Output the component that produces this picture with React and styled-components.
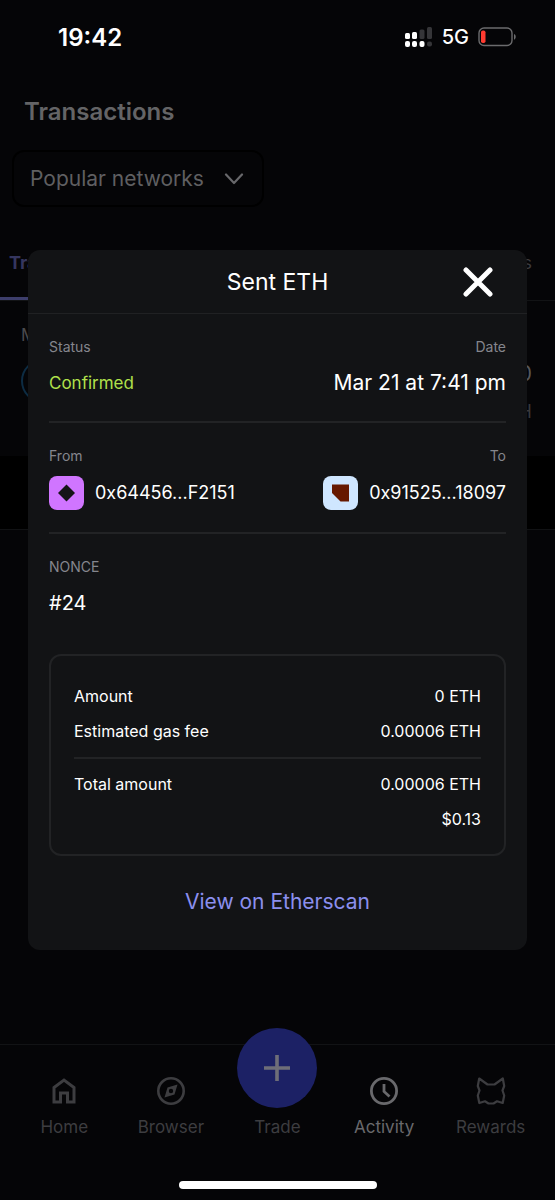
import React from "react";
import styled, { createGlobalStyle } from "styled-components";

const GlobalStyle = createGlobalStyle`
    * {
        box-sizing: border-box;
        margin: 0;
        padding: 0;
    }

    body {
        background-color: #050507;
        font-family: Inter, "Liberation Sans", sans-serif;
        color: #fff;
    }

    button, select {
        font-family: inherit;
    }
`

const Screen = styled.div`
    position: relative;
    display: flex;
    flex-direction: column;
    min-height: 100vh;
`

const StatusBar = styled.div`
    display: flex;
    align-items: center;
    justify-content: space-between;
    height: 74px;
    padding: 0 38px 0 58px;
`

const Clock = styled.time`
    font-size: 24px;
    font-weight: 600;
`

const StatusIcons = styled.div`
    display: flex;
    align-items: center;
    gap: 9px;
    font-size: 20px;
    font-weight: 500;
`

const PageTitle = styled.h1`
    padding: 22px 24px 0;
    font-size: 24px;
    font-weight: 600;
    line-height: 32px;
    color: #646466;
`

const Filter = styled.div`
    display: flex;
    padding: 22px 12px 0;
`

const SelectWrap = styled.div`
    display: grid;
    align-items: center;
    width: 252px;
    max-width: 100%;

    > * {
        grid-area: 1 / 1;
    }

    svg {
        justify-self: end;
        margin-right: 20px;
        pointer-events: none;
    }
`

const Select = styled.select`
    width: 100%;
    height: 57px;
    padding: 0 48px 0 16px;
    appearance: none;
    background: none;
    border: 2px solid #000;
    border-radius: 12px;
    font-size: 21px;
    color: #5f5f61;
`

const Tabs = styled.div`
    display: flex;
    justify-content: space-between;
    margin-top: 20px;
    padding-right: 23px;
    border-bottom: 1px solid #121315;
`

const Tab = styled.button`
    height: 73px;
    padding: 0 9px;
    background: none;
    border: none;
    border-bottom: 3px solid ${(props) => (props.$active ? "#3d3e6b" : "transparent")};
    font-size: 18px;
    font-weight: ${(props) => (props.$active ? 700 : 400)};
    color: ${(props) => (props.$active ? "#35365f" : "#3b3b3e")};

    &:last-child {
        padding-right: 0;
    }
`

const Activity = styled.div`
    display: grid;
    grid-template-columns: 44px auto;
    grid-template-rows: 24px 1fr;
    align-items: center;
    justify-content: space-between;
    height: 155px;
    padding: 22px 23px 17px 21px;
`

const ActivityDate = styled.p`
    grid-column: 1 / -1;
    font-size: 17px;
    line-height: 24px;
    color: #4a4a4d;
`

const Token = styled.span`
    width: 44px;
    height: 44px;
    margin-bottom: 24px;
    border: 2px solid #0d2c43;
    border-radius: 50%;
`

const Amounts = styled.div`
    text-align: right;
    font-size: 21px;
    line-height: 38px;
    color: #57575a;

    small {
        display: block;
        font-size: 18px;
        color: #38383b;
    }
`

const Band = styled.div`
    height: 74px;
    background-color: #000;
    border-bottom: 1px solid #111214;
`

const Overlay = styled.div`
    position: absolute;
    inset: 0;
    display: flex;
    align-items: center;
    padding: 0 28px;
`

const Modal = styled.section`
    width: 100%;
    padding-bottom: 24px;
    background-color: #121315;
    border-radius: 12px;
`

const ModalHeader = styled.header`
    display: grid;
    grid-template-columns: 56px 1fr 56px;
    align-items: center;
    height: 64px;
    padding: 0 21px;
    border-bottom: 1px solid #202123;
`

const ModalTitle = styled.h2`
    grid-column: 2;
    text-align: center;
    font-size: 23px;
    font-weight: 400;
`

const CloseButton = styled.button`
    display: flex;
    justify-content: center;
    background: none;
    border: none;
    color: #fff;
`

const ModalBody = styled.div`
    padding: 0 21px;
`

const Section = styled.dl`
    display: flex;
    justify-content: space-between;
    padding: 23px 0 ${(props) => props.$bottom}px;
    border-bottom: ${(props) => (props.$last ? "none" : "2px solid #222325")};
`

const Field = styled.div`
    text-align: ${(props) => (props.$right ? "right" : "left")};
`

const Label = styled.dt`
    margin-bottom: ${(props) => (props.$tight ? 10 : 14)}px;
    font-size: 14px;
    line-height: 20px;
    color: #85868d;
`

const Value = styled.dd`
    font-size: ${(props) => props.$size || 21}px;
    line-height: 24px;
    color: ${(props) => props.$color || "#fff"};
`

const Address = styled.dd`
    display: flex;
    align-items: center;
    gap: 11px;
    font-size: 18px;
    line-height: 34px;
`

const Summary = styled.div`
    padding: 28px 23px 23px;
    border: 2px solid #222325;
    border-radius: 12px;
`

const Rows = styled.dl`
    display: grid;
    grid-template-columns: 1fr auto;
    row-gap: 11px;
    font-size: 16px;
    line-height: 24px;

    dd {
        grid-column: 2;
        text-align: right;
    }

    & + & {
        margin-top: 14px;
        padding-top: 13px;
        border-top: 2px solid #222325;
    }
`

const ExplorerLink = styled.a`
    display: block;
    margin-top: 22px;
    text-align: center;
    text-decoration: none;
    font-size: 21px;
    line-height: 48px;
    color: #8b8fee;
`

const TabBar = styled.nav`
    display: grid;
    grid-template-columns: repeat(5, 1fr);
    height: 137px;
    margin-top: auto;
    padding: 23px 11px 0;
    border-top: 1px solid #121315;
`

const TabItem = styled.button`
    display: flex;
    flex-direction: column;
    align-items: center;
    justify-content: flex-end;
    gap: 10px;
    height: 71px;
    background: none;
    border: none;
    font-size: 17px;
    line-height: 24px;
    color: ${(props) => (props.$active ? "#69696c" : "#3d3d40")};
`

const TradeIcon = styled.span`
    display: flex;
    align-items: center;
    justify-content: center;
    flex: none;
    width: 80px;
    height: 80px;
    margin-bottom: -3px;
    background-color: #1c2165;
    border-radius: 50%;
    color: #6e6e78;
`

const HomeIndicator = styled.div`
    width: 198px;
    height: 8px;
    margin: 0 auto 11px;
    background-color: #fff;
    border-radius: 4px;
`

const SignalIcon = () => (
    <svg width="28" height="20" viewBox="0 0 28 20" fill="#fff">
        <rect x="0" y="6" width="5" height="6" rx="1.5" />
        <rect x="7" y="5" width="5" height="7" rx="1.5" />
        <rect x="14.5" y="2.5" width="5" height="9.5" rx="1.5" fill="#353538" />
        <rect x="22" y="0" width="5" height="12" rx="1.5" fill="#353538" />
        <rect x="0" y="14" width="5" height="6" rx="2" />
        <rect x="7" y="14" width="5" height="6" rx="2" />
        <rect x="14.5" y="14" width="5" height="6" rx="2" />
        <rect x="22" y="14.5" width="5" height="5" rx="2" fill="#353538" />
    </svg>
)

const BatteryIcon = () => (
    <svg width="39" height="20" viewBox="0 0 39 20">
        <rect x="1" y="1" width="33" height="17.5" rx="5" fill="none" stroke="#6b6b6d" strokeWidth="1.4" />
        <rect x="3" y="3.5" width="4.5" height="12.5" rx="1.8" fill="#ff3b30" />
        <path d="M36 7c2.3 0.6 2.3 5 0 5.700z" fill="#6b6b6d" />
    </svg>
)

const ChevronIcon = () => (
    <svg width="20" height="12" viewBox="0 0 20 12" fill="none" stroke="#68686b" strokeWidth="2.2" strokeLinecap="round" strokeLinejoin="round">
        <path d="M2 1.500l8 8.500 8-8.500" />
    </svg>
)

const CloseIcon = () => (
    <svg width="30" height="30" viewBox="0 0 30 30" stroke="currentColor" strokeWidth="5" strokeLinecap="round">
        <path d="M3 3l24 24M27 3L3 27" />
    </svg>
)

const FromAvatar = () => (
    <svg width="35" height="34" viewBox="0 0 35 34">
        <rect width="35" height="34" rx="8" fill="#d075ff" />
        <path d="M17.500 8.500l8.500 8.500-8.500 8.500L9 17z" fill="#151417" />
    </svg>
)

const ToAvatar = () => (
    <svg width="35" height="34" viewBox="0 0 35 34">
        <rect width="35" height="34" rx="8" fill="#cfe6ff" />
        <path d="M9 8.500h17v17h-8.500L9 17z" fill="#661800" />
    </svg>
)

const HomeIcon = () => (
    <svg width="28" height="28" viewBox="0 0 28 28" fill="none" stroke="currentColor" strokeWidth="3">
        <path d="M4 25V10.500L14 3l10 7.500V25h-6.500v-9h-7v9z" />
    </svg>
)

const BrowserIcon = () => (
    <svg width="28" height="28" viewBox="0 0 28 28" fill="none" stroke="currentColor" strokeWidth="2.6">
        <circle cx="14" cy="14" r="12.7" />
        <path fill="currentColor" stroke="none" fillRule="evenodd" d="M7.500 20.500l3-10 10-3-3 10zM14 11.800a2.200 2.200 0 1 0 0 4.400 2.200 2.200 0 0 0 0-4.400z" />
    </svg>
)

const PlusIcon = () => (
    <svg width="28" height="28" viewBox="0 0 28 28" stroke="currentColor" strokeWidth="3.6">
        <path d="M14 1v26M1 14h26" />
    </svg>
)

const ActivityIcon = () => (
    <svg width="28" height="28" viewBox="0 0 28 28" fill="none" stroke="currentColor" strokeWidth="2.8">
        <circle cx="14" cy="14" r="12.6" />
        <path d="M14 7v7.500l5.500 5" />
    </svg>
)

const RewardsIcon = () => (
    <svg width="30" height="28" viewBox="0 0 30 28" fill="none" stroke="currentColor" strokeWidth="2.2" strokeLinejoin="round">
        <path d="M3.200 1.500l8.300 6h7l8.300-6 1.400 7.500-1.700 4.500 1.700 5-1.500 7.500-5.700-1.700-3.500 2.200h-5l-3.500-2.200L3.300 26l-1.500-7.500 1.700-5L1.800 9z" />
    </svg>
)

const App = () => {
    return (
        <>
            <GlobalStyle />
            <Screen>
                <StatusBar>
                    <Clock>19:42</Clock>
                    <StatusIcons>
                        <SignalIcon />
                        <span>5G</span>
                        <BatteryIcon />
                    </StatusIcons>
                </StatusBar>

                <PageTitle>Transactions</PageTitle>

                <Filter>
                    <SelectWrap>
                        <Select aria-label="Network">
                            <option>Popular networks</option>
                        </Select>
                        <ChevronIcon />
                    </SelectWrap>
                </Filter>

                <Tabs>
                    <Tab $active>Transactions</Tab>
                    <Tab>Transfers</Tab>
                </Tabs>

                <Activity>
                    <ActivityDate>M</ActivityDate>
                    <Token />
                    <Amounts>
                        0
                        <small>ETH</small>
                    </Amounts>
                </Activity>
                <Band />

                <TabBar>
                    <TabItem><HomeIcon />Home</TabItem>
                    <TabItem><BrowserIcon />Browser</TabItem>
                    <TabItem>
                        <TradeIcon><PlusIcon /></TradeIcon>
                        Trade
                    </TabItem>
                    <TabItem $active><ActivityIcon />Activity</TabItem>
                    <TabItem><RewardsIcon />Rewards</TabItem>
                </TabBar>
                <HomeIndicator />

                <Overlay>
                    <Modal role="dialog" aria-labelledby="modal-title">
                        <ModalHeader>
                            <ModalTitle id="modal-title">Sent ETH</ModalTitle>
                            <CloseButton aria-label="Close"><CloseIcon /></CloseButton>
                        </ModalHeader>

                        <ModalBody>
                            <Section $bottom={26}>
                                <Field>
                                    <Label>Status</Label>
                                    <Value $size={17} $color="#b0e04b">Confirmed</Value>
                                </Field>
                                <Field $right>
                                    <Label>Date</Label>
                                    <Value>Mar 21 at 7:41 pm</Value>
                                </Field>
                            </Section>

                            <Section $bottom={22}>
                                <Field>
                                    <Label $tight>From</Label>
                                    <Address><FromAvatar />0x64456...F2151</Address>
                                </Field>
                                <Field $right>
                                    <Label $tight>To</Label>
                                    <Address><ToAvatar />0x91525...18097</Address>
                                </Field>
                            </Section>

                            <Section $bottom={39} $last>
                                <Field>
                                    <Label>NONCE</Label>
                                    <Value $size={20}>#24</Value>
                                </Field>
                            </Section>

                            <Summary>
                                <Rows>
                                    <dt>Amount</dt>
                                    <dd>0 ETH</dd>
                                    <dt>Estimated gas fee</dt>
                                    <dd>0.00006 ETH</dd>
                                </Rows>
                                <Rows>
                                    <dt>Total amount</dt>
                                    <dd>0.00006 ETH</dd>
                                    <dd>$0.13</dd>
                                </Rows>
                            </Summary>

                            <ExplorerLink href="#">View on Etherscan</ExplorerLink>
                        </ModalBody>
                    </Modal>
                </Overlay>
            </Screen>
        </>
    );
};

export default App;
